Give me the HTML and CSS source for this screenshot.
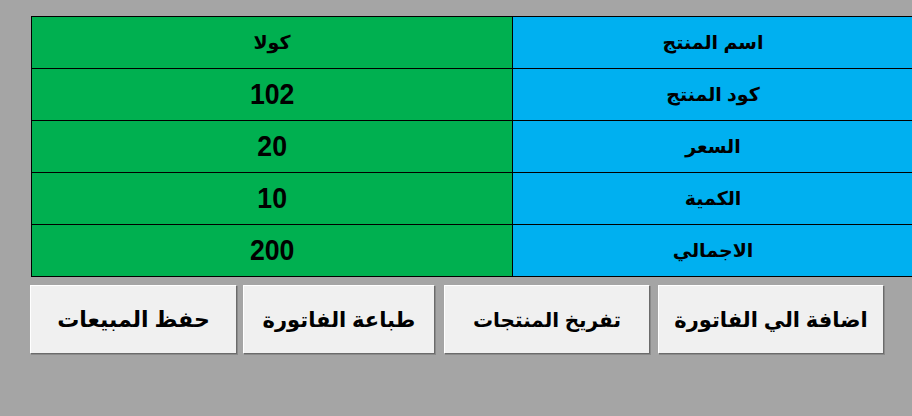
FILE: index.html
```html
<!DOCTYPE html>
<html lang="ar">
<head>
<meta charset="utf-8">
<link rel="stylesheet" href="styles.css">
</head>
<body>
<div class="page">
  <table class="invoice" dir="rtl">
    <tr><th>اسم المنتج</th><td>كولا</td></tr>
    <tr><th>كود المنتج</th><td><span class="num">102</span></td></tr>
    <tr><th>السعر</th><td><span class="num">20</span></td></tr>
    <tr><th>الكمية</th><td><span class="num">10</span></td></tr>
    <tr><th>الاجمالي</th><td><span class="num">200</span></td></tr>
  </table>
  <div class="actions">
    <button class="btn b-save">حفظ المبيعات</button>
    <button class="btn b-print">طباعة الفاتورة</button>
    <button class="btn b-clear">تفريخ المنتجات</button>
    <button class="btn b-add">اضافة الي الفاتورة</button>
  </div>
</div>
</body>
</html>
```
FILE: styles.css
```css
html, body {
  margin: 0;
  padding: 0;
  background: #a5a5a5;
  overflow: hidden;
  width: 912px;
  height: 416px;
}
.page {
  padding: 16px 0 0 31px;
  font-family: "Liberation Sans", "DejaVu Sans", sans-serif;
  font-weight: bold;
}
.invoice {
  border-collapse: collapse;
  width: 883px;
  table-layout: fixed;
}
.invoice th, .invoice td {
  height: 51px;
  padding: 0;
  border: 1px solid #000;
  text-align: center;
  color: #000;
  font-size: 19px;
  font-weight: bold;
}
.invoice th {
  background: #00b0f0;
  width: 400px;
}
.invoice td {
  background: #00b050;
}
.num {
  display: inline-block;
  font-family: "Liberation Sans", sans-serif;
  font-size: 29px;
  transform: scaleX(0.92);
}
.actions {
  display: flex;
  margin-top: 8px;
  margin-left: -1px;
}
.btn {
  height: 69px;
  background: #f0f0f0;
  border: 1px solid;
  border-color: #ffffff #6b6b6b #6b6b6b #ffffff;
  box-shadow: 1px 1px 0 #8a8a8a;
  font-family: "Liberation Sans", "DejaVu Sans", sans-serif;
  font-weight: bold;
  color: #000;
  padding: 0;
}
.b-save { width: 207px; font-size: 22px; }
.b-print { width: 192px; margin-left: 6px; font-size: 21px; }
.b-clear { width: 206px; margin-left: 9px; font-size: 20px; }
.b-add { width: 226px; margin-left: 8px; font-size: 21px; }
```
